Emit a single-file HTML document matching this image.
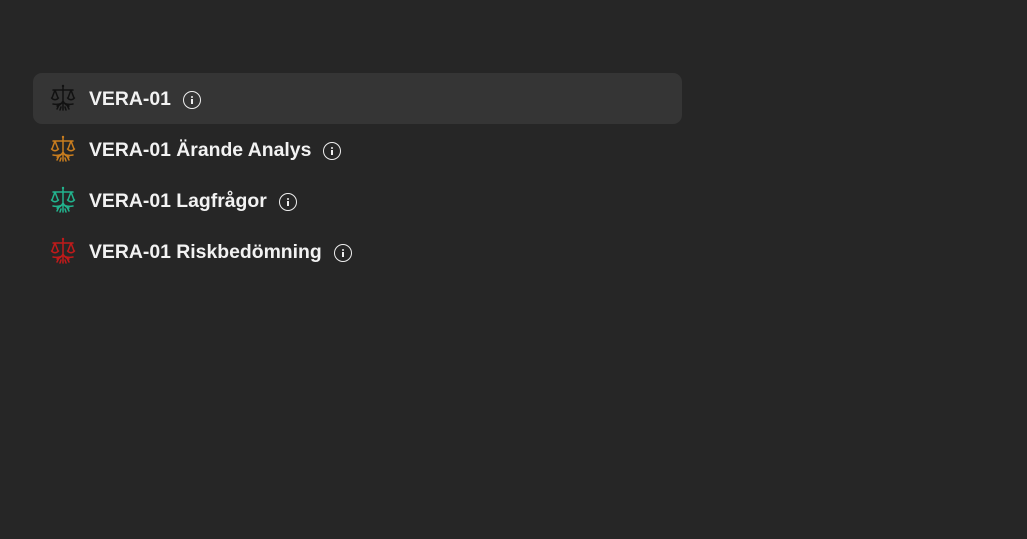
<!DOCTYPE html>
<html><head><meta charset="utf-8"><style>
html,body{margin:0;padding:0;background:#262626;width:1027px;height:539px;overflow:hidden;font-family:"Liberation Sans",sans-serif;}
.row{position:absolute;left:33px;width:649px;height:51px;}
.row.sel{background:#353535;border-radius:9px;}
.ic{position:absolute;left:17px;top:11px;width:26px;height:29px;}
.t{position:absolute;left:56px;top:14px;color:#f2f2f2;font-weight:bold;font-size:19.4px;white-space:nowrap;display:flex;align-items:center;line-height:24px;}
.info{display:inline-block;margin-left:12px;width:16px;height:16px;border:1.5px solid #eee;border-radius:50%;position:relative;top:1px}
.info:before{content:"";position:absolute;left:7px;top:3.5px;width:2px;height:2px;background:#eee;border-radius:1px}
.info:after{content:"";position:absolute;left:7px;top:7px;width:2px;height:5px;background:#eee}
</style></head><body>
<svg width="0" height="0" style="position:absolute"><defs>
<g id="sc" fill="none" stroke-width="1.5" stroke-linecap="round">
<circle cx="13" cy="2" r="1.2" stroke="none" fill="currentColor"/>
<path d="M13 3v14M3 6h20M5 6l-3 8M5 6l3 8M21 6l-3 8M21 6l3 8M1.5 14q3.5 3.5 7 0M17.5 14q3.5 3.5 7 0M13 17q-2 4-6 5M13 17q2 4 6 5M13 17v9M12 19q-4 2-9 1M14 19q4 2 9 1M9 21l-2 4M17 21l2 4M11 23l-1 3M15 23l1 3"/>
</g></defs></svg>
<div class="row sel" style="top:73px"><svg class="ic" viewBox="0 0 26 29" stroke="#111" color="#111"><use href="#sc"/></svg><div class="t">VERA-01<span class="info"></span></div></div>
<div class="row" style="top:124px"><svg class="ic" viewBox="0 0 26 29" stroke="#c97d1e" color="#c97d1e"><use href="#sc"/></svg><div class="t">VERA-01 Ärande Analys<span class="info"></span></div></div>
<div class="row" style="top:175px"><svg class="ic" viewBox="0 0 26 29" stroke="#22b48e" color="#22b48e"><use href="#sc"/></svg><div class="t">VERA-01 Lagfrågor<span class="info"></span></div></div>
<div class="row" style="top:226px"><svg class="ic" viewBox="0 0 26 29" stroke="#c01a1a" color="#c01a1a"><use href="#sc"/></svg><div class="t">VERA-01 Riskbedömning<span class="info"></span></div></div>
</body></html>
